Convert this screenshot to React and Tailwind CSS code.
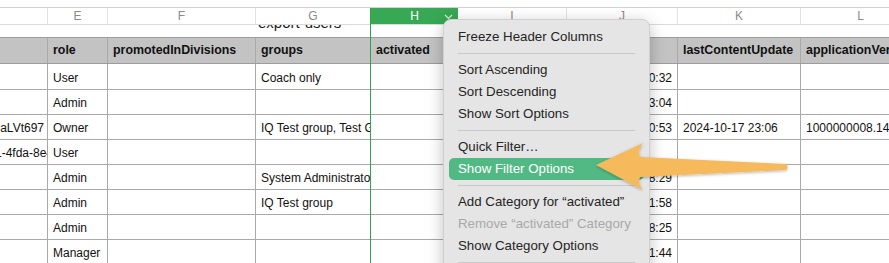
import React from 'react';

const widths = [48, 60, 148, 115, 87, 109, 111, 123, 120];
const letters = ['', 'E', 'F', 'G', 'H', 'I', 'J', 'K', 'L'];
const headers = ['', 'role', 'promotedInDivisions', 'groups', 'activated', '', '', 'lastContentUpdate', 'applicationVersion'];

const rows = [
  ['', 'User', '', 'Coach only', '', '', '2024-10-18 10:32', '', ''],
  ['', 'Admin', '', '', '', '', '2024-10-17 13:04', '', ''],
  ['aLVt697', 'Owner', '', 'IQ Test group, Test Group 2', '', '', '2024-10-17 20:53', '2024-10-17 23:06', '1000000008.145'],
  ['c3b1-4fda-8e4', 'User', '', '', '', '', '', '', ''],
  ['', 'Admin', '', 'System Administrators', '', '', '2024-10-16 18:29', '', ''],
  ['', 'Admin', '', 'IQ Test group', '', '', '2024-10-16 11:58', '', ''],
  ['', 'Admin', '', '', '', '', '2024-10-15 08:25', '', ''],
  ['', 'Manager', '', '', '', '', '2024-10-15 11:44', '', ''],
];

function Cell({ w, children, className = '', last }) {
  return (
    <div
      className={`shrink-0 h-full flex items-center overflow-hidden whitespace-nowrap ${last ? '' : 'border-r border-[#a9a9a9]'} ${className}`}
      style={{ width: w }}
    >
      {children}
    </div>
  );
}

function MenuItem({ children, active, disabled }) {
  return (
    <div
      className={`h-[22px] mx-[5px] px-[9px] flex items-center rounded-[5px] text-[13.3px] ${
        active ? 'bg-[#52b985] text-white' : disabled ? 'text-[#a9a9a9]' : 'text-[#242424]'
      }`}
    >
      {children}
    </div>
  );
}

function Sep() {
  return (
    <div className="h-[11px] flex items-center px-[14px]">
      <div className="h-px w-full bg-[#c9c9c9]" />
    </div>
  );
}

export default function App() {
  return (
    <div
      className="relative w-[889px] h-[263px] overflow-hidden bg-white"
      style={{ fontFamily: '"Liberation Sans", Arial, sans-serif' }}
    >
      {/* top strip */}
      <div className="h-[8px] border-b border-[#d2d2d2]" />

      {/* column letters */}
      <div className="flex h-[17px] border-b border-[#dadada]">
        {letters.map((l, i) => (
          <div
            key={i}
            className={`shrink-0 h-full flex items-center justify-center text-[12px] ${
              l === 'H' ? 'bg-[#37a854] text-white relative' : 'text-[#8a8a8a] border-r border-[#e2e2e2]'
            }`}
            style={{ width: widths[i] }}
          >
            {l}
            {l === 'H' && (
              <svg className="absolute right-[5px] top-[6px]" width="9" height="6" viewBox="0 0 9 6">
                <path d="M1 1l3.5 3.5L8 1" fill="none" stroke="#d8f0dd" strokeWidth="1.2" />
              </svg>
            )}
          </div>
        ))}
      </div>

      {/* sheet title */}
      <div className="h-[12px] overflow-hidden">
        <div className="pl-[258px] mt-[-10px] text-[15px] leading-none text-[#1a1a1a]">export-users</div>
      </div>

      {/* table */}
      <div className="border-t border-[#9c9c9c]">
        <div className="flex h-[26px] bg-[#c3c3c3] border-b border-[#9c9c9c]">
          {headers.map((h, i) => (
            <Cell key={i} w={widths[i]} last={i === widths.length - 1} className="pl-[5px] text-[12.4px] font-bold text-[#111]">
              {h}
            </Cell>
          ))}
        </div>
        {rows.map((r, ri) => (
          <div key={ri} className={`flex border-b border-[#a9a9a9] ${ri === 0 ? 'h-[26px]' : 'h-[25px]'}`}>
            {r.map((v, i) => (
              <Cell
                key={i}
                w={widths[i]}
                last={i === widths.length - 1}
                className={`text-[12px] text-[#111] pt-[2px] ${
                  i === 0 ? 'justify-end pr-[3px]' : i === 6 ? 'justify-end pr-[5px]' : 'pl-[5px]'
                }`}
              >
                {i === 0 && ri === 3 ? <span className="mr-[-9px]">{v}</span> : v}
              </Cell>
            ))}
          </div>
        ))}
      </div>

      {/* selected column edge */}
      <div className="absolute left-[370px] top-[8px] bottom-0 w-px bg-[#2fa24a]" />

      {/* context menu */}
      <div className="absolute left-[443px] top-[19px] w-[207px] h-[260px] rounded-[8px] bg-[#e5e5e5] border border-[#d0d0d0] shadow-[0_4px_16px_rgba(0,0,0,0.25)] pt-[6px]">
        <MenuItem>Freeze Header Columns</MenuItem>
        <Sep />
        <MenuItem>Sort Ascending</MenuItem>
        <MenuItem>Sort Descending</MenuItem>
        <MenuItem>Show Sort Options</MenuItem>
        <Sep />
        <MenuItem>Quick Filter…</MenuItem>
        <MenuItem active>Show Filter Options</MenuItem>
        <Sep />
        <MenuItem>Add Category for “activated”</MenuItem>
        <MenuItem disabled>Remove “activated” Category</MenuItem>
        <MenuItem>Show Category Options</MenuItem>
        <Sep />
      </div>

      {/* annotation arrow */}
      <svg className="absolute left-[590px] top-[138px]" width="215" height="62" viewBox="0 0 215 62">
        <defs>
          <filter id="sh" x="-10%" y="-30%" width="120%" height="160%">
            <feDropShadow dx="0" dy="1" stdDeviation="1.5" floodColor="#000" floodOpacity="0.3" />
          </filter>
        </defs>
        <path
          d="M6 27 L53 5 Q47 13 50 19 L196 26 Q199 29 196 32 L50 39 Q47 45 53 52 Z"
          fill="#f6b95b"
          filter="url(#sh)"
        />
      </svg>
    </div>
  );
}
